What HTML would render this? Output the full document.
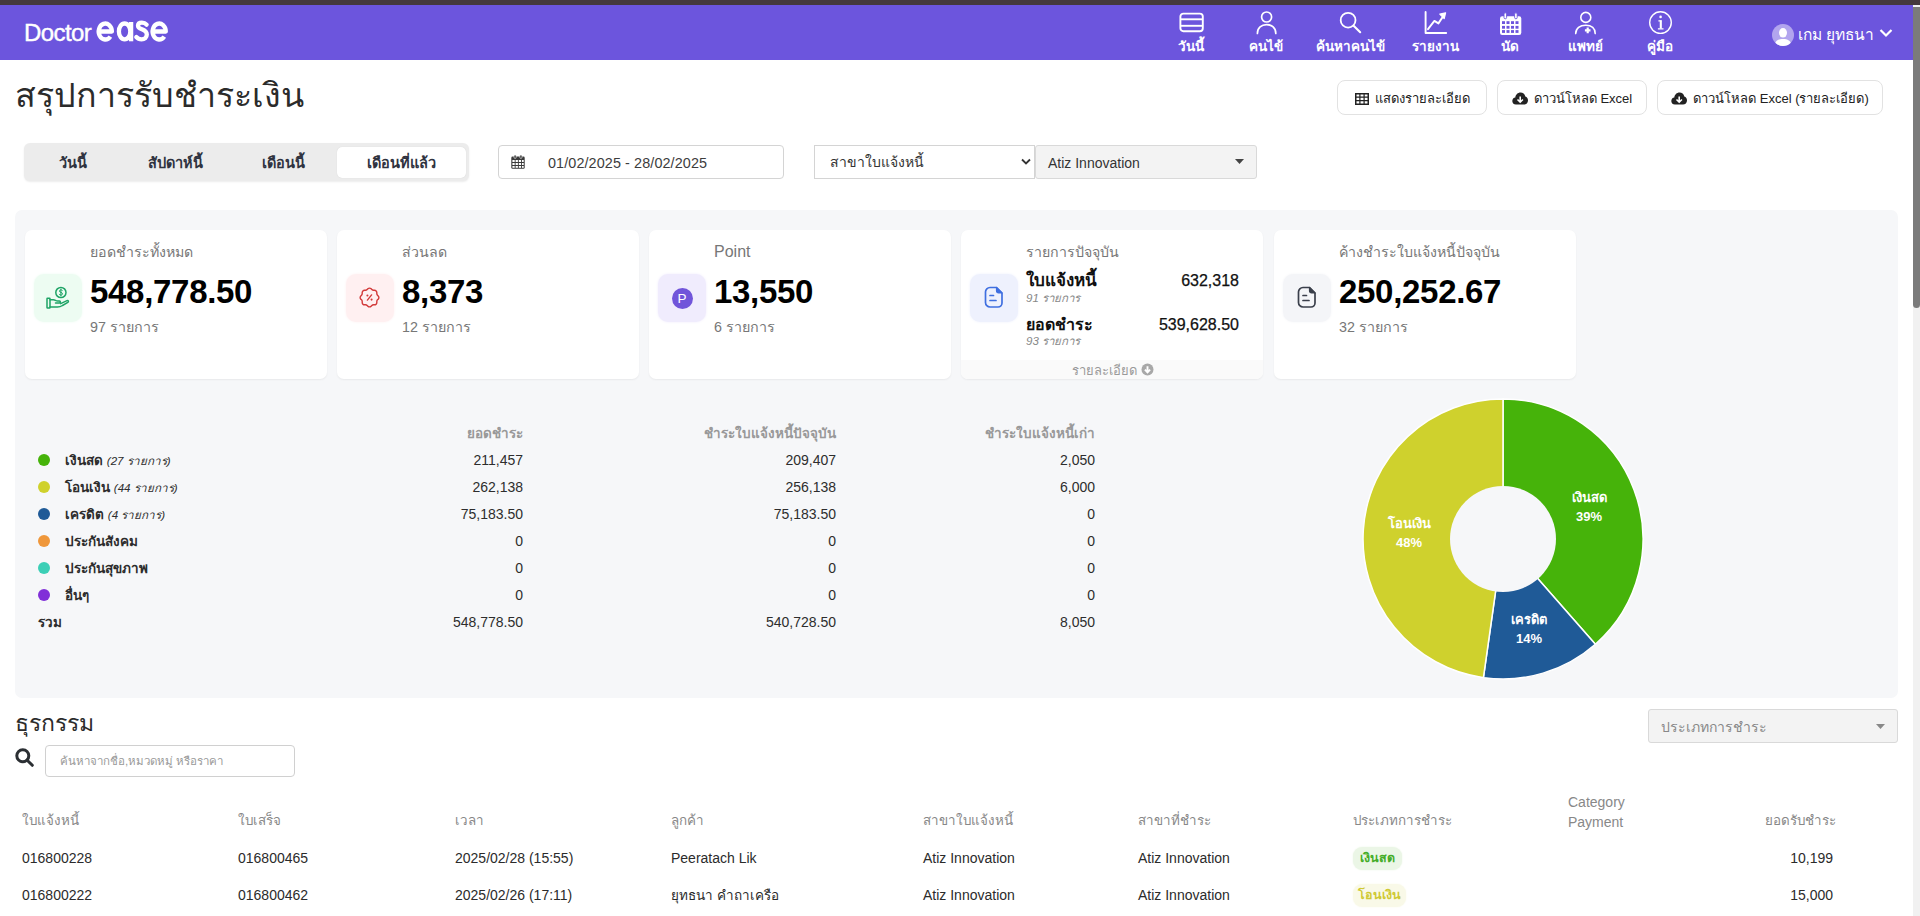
<!DOCTYPE html>
<html><head><meta charset="utf-8">
<style>
*{box-sizing:border-box;margin:0;padding:0}
html,body{width:1920px;height:916px;overflow:hidden;background:#fff;font-family:"Liberation Sans",sans-serif;color:#212529}
.a{position:absolute}
#topstrip{left:0;top:0;width:1920px;height:5px;background:#45393d}
#hdr{left:0;top:5px;width:1913px;height:55px;background:#6c55dd}
#sbar{left:1913px;top:5px;width:7px;height:911px;background:#f1f1f1}
#sthumb{left:1913px;top:7px;width:7px;height:301px;background:#7b7b7b;border-radius:0 0 3.5px 3.5px}
.logo{left:24px;top:19px;color:#fff;font-size:24px;white-space:nowrap}
.nav{top:11px;width:70px;text-align:center;color:#fff}
.nav svg{display:block;margin:0 auto}
.nav span{display:block;font-size:13.5px;font-weight:bold;line-height:16px;margin-top:3.5px;white-space:nowrap}
.title{left:15px;top:68px;font-size:34px;color:#2b2b2b;white-space:nowrap}
.btn{top:80px;height:35px;border:1px solid #e2e2e2;border-radius:8px;background:#fff;font-size:13px;color:#222;display:flex;align-items:center;justify-content:center;gap:6px;white-space:nowrap;padding-top:2px}
.seg{left:24px;top:143px;width:445px;height:38px;background:#ececec;border-radius:6px}
.segi{top:0;height:38px;line-height:41px;font-size:14.5px;font-weight:bold;color:#2f3340;text-align:center}
.segact{left:337px;top:147px;width:129px;height:31px;background:#fff;border-radius:5px}
.inp{border:1px solid #d4d4d4;border-radius:4px;background:#fff;font-size:14px;color:#333;white-space:nowrap}
.panel{left:15px;top:210px;width:1883px;height:488px;background:#f6f7f9;border-radius:7px}
.card{top:230px;width:302px;height:149px;background:#fff;border-radius:7px;box-shadow:0 1px 2px rgba(0,0,0,.06)}
.ibox{left:9px;top:44px;width:48px;height:48px;border-radius:10px}
.clab{left:65px;top:10.5px;font-size:14.2px;color:#777;white-space:nowrap}
.cnum{left:65px;top:43px;font-size:33px;font-weight:bold;color:#000;white-space:nowrap;letter-spacing:-0.3px}
.csub{left:65px;top:85.5px;font-size:14.3px;color:#777;white-space:nowrap}
.lg{font-size:14px;color:#2d2d2d;white-space:nowrap}
.lgh{font-size:13.5px;color:#999;font-weight:bold;white-space:nowrap}
.dot{width:12px;height:12px;border-radius:6px}
.th{font-size:13.4px;color:#888;white-space:nowrap}
.td{font-size:14px;color:#2b2b2b;white-space:nowrap}
</style></head><body>
<div id="topstrip" class="a"></div>
<div id="hdr" class="a"></div>
<div id="sbar" class="a"></div>
<div id="sthumb" class="a"></div>
<div class="a logo"><span style="font-size:24px;letter-spacing:-0.6px;-webkit-text-stroke:0.4px #fff">Doctor</span></div>


<svg class="a" style="left:90px;top:15px" width="85" height="33" viewBox="0 0 85 33" fill="none" stroke="#fff" stroke-width="4.3"><path d="M8.9 16.5H21.9A6.6 8 0 1 0 20.4 21.6" stroke-linejoin="round"/><ellipse cx="34.6" cy="16.4" rx="5.7" ry="7.9"/><path d="M41.1 7V26.3"/><path d="M56.6 9.6C55.2 8 53.6 7.6 51.9 7.6C49.4 7.6 48 8.9 48 10.7C48 15.3 56.8 13.4 56.8 19.6C56.8 22.6 54.6 24.3 51.6 24.3C49.5 24.3 47.7 23.6 46.3 22" stroke-linecap="round"/><path d="M62.8 16.5H75.8A6.6 8 0 1 0 74.3 21.6" stroke-linejoin="round"/></svg>
<!-- nav -->
<div class="a nav" style="left:1156px"><svg width="28" height="24" viewBox="0 0 28 24" fill="none" stroke="#fff" stroke-width="1.9"><rect x="3.4" y="2.6" width="22.4" height="17.6" rx="3"/><line x1="3.4" y1="8.3" x2="25.8" y2="8.3"/><line x1="3.4" y1="14.8" x2="25.8" y2="14.8"/></svg><span>วันนี้</span></div>
<div class="a nav" style="left:1231px"><svg width="28" height="24" viewBox="0 0 28 24" fill="none" stroke="#fff" stroke-width="1.7" stroke-linecap="round"><circle cx="14.6" cy="6" r="5"/><path d="M5.4 22.4C5.4 16.8 9.5 13.6 14.6 13.6C19.7 13.6 23.8 16.8 23.8 22.4"/></svg><span>คนไข้</span></div>
<div class="a nav" style="left:1315px"><svg width="28" height="24" viewBox="0 0 28 24" fill="none" stroke="#fff" stroke-width="1.8" stroke-linecap="round"><circle cx="12.1" cy="9.2" r="7.4"/><path d="M17.6 14.7L24.2 21.2" stroke-width="2.1"/></svg><span>ค้นหาคนไข้</span></div>
<div class="a nav" style="left:1400px"><svg width="28" height="24" viewBox="0 0 28 24" fill="none" stroke="#fff" stroke-width="1.9" stroke-linecap="round" stroke-linejoin="round"><path d="M4.6 1V22H25.2"/><path d="M7 18.2L13.4 9.9L17.4 12.4L23 4"/><path d="M24.6 1.8L18.8 3.2L23.2 7.6Z" fill="#fff" stroke-width="1.2"/></svg><span>รายงาน</span></div>
<div class="a nav" style="left:1475px"><svg width="28" height="24" viewBox="0 0 28 24"><rect x="4" y="5.2" width="21.3" height="18.8" rx="2.2" fill="#fff"/><rect x="8" y="1.8" width="2.6" height="6" rx="1.3" fill="#fff" stroke="#6c55dd" stroke-width="0.9"/><rect x="18.6" y="1.8" width="2.6" height="6" rx="1.3" fill="#fff" stroke="#6c55dd" stroke-width="0.9"/><g fill="#6c55dd"><rect x="6" y="10.2" width="3" height="2.8"/><rect x="10.5" y="10.2" width="3" height="2.8"/><rect x="15" y="10.2" width="3" height="2.8"/><rect x="19.5" y="10.2" width="3" height="2.8"/><rect x="6" y="14.9" width="3" height="2.8"/><rect x="10.5" y="14.9" width="3" height="2.8"/><rect x="15" y="14.9" width="3" height="2.8"/><rect x="19.5" y="14.9" width="3" height="2.8"/><rect x="6" y="19.1" width="3" height="2.8"/><rect x="10.5" y="19.1" width="3" height="2.8"/><rect x="15" y="19.1" width="3" height="2.8"/><rect x="19.5" y="19.1" width="3" height="2.8"/></g></svg><span>นัด</span></div>
<div class="a nav" style="left:1550px"><svg width="28" height="24" viewBox="0 0 28 24" fill="none" stroke="#fff" stroke-width="1.6" stroke-linecap="round"><circle cx="14.8" cy="6.4" r="5"/><path d="M4.7 22.6C4.7 17.3 9 14.2 14.8 14.2C20.6 14.2 24.2 17.3 24.2 22.6"/><path d="M16.7 16.6V22.2M13.9 19.4H19.5" stroke-width="2.2" stroke-linecap="butt"/></svg><span>แพทย์</span></div>
<div class="a nav" style="left:1625px"><svg width="28" height="24" viewBox="0 0 28 24" fill="none" stroke="#fff" stroke-width="1.4"><circle cx="14.5" cy="11.6" r="10.8"/><circle cx="14.6" cy="5.9" r="1.3" fill="#fff" stroke="none"/><path d="M14.8 9.3V17.6" stroke-width="2.1"/><path d="M12.4 9.9H15.5M11.9 17.9H17.5" stroke-width="1.4"/></svg><span>คู่มือ</span></div>
<div class="a" style="left:1772px;top:24px;width:22px;height:22px;border-radius:50%;background:#b2a5ee;overflow:hidden"><svg width="22" height="22" viewBox="0 0 22 22"><ellipse cx="11" cy="8.8" rx="4" ry="4.8" fill="#fff"/><path d="M2.5 22C3 16.5 6.5 15 11 15C15.5 15 19 16.5 19.5 22Z" fill="#fff"/></svg></div>
<div class="a" style="left:1798px;top:22px;color:#fff;font-size:15.5px;white-space:nowrap">เกม ยุทธนา</div>
<svg class="a" style="left:1879px;top:28px" width="14" height="10" viewBox="0 0 14 10" fill="none" stroke="#fff" stroke-width="2.2"><path d="M1.5 2 L7 7.5 L12.5 2"/></svg>

<!-- page header -->
<div class="a title">สรุปการรับชำระเงิน</div>
<div class="a btn" style="left:1337px;width:150px"><svg width="14" height="12" viewBox="0 0 14 12"><rect x="0.75" y="0.75" width="12.5" height="10.5" fill="none" stroke="#222" stroke-width="1.5"/><path d="M0.75 4.2H13.25M0.75 7.7H13.25M4.9 0.75V11.25M9.1 0.75V11.25" stroke="#222" stroke-width="1.2"/></svg>แสดงรายละเอียด</div>
<div class="a btn" style="left:1497px;width:150px"><svg width="16" height="13" viewBox="0 0 16 13"><path d="M4 12.5 C1.5 12.5 0.3 10.8 0.3 9 C0.3 7.2 1.6 5.8 3.3 5.6 C3.6 2.7 5.8 0.5 8.5 0.5 C10.9 0.5 12.8 2.1 13.3 4.4 C15 4.8 16 6.4 16 8.4 C16 10.7 14.3 12.5 12 12.5Z" fill="#222"/><path d="M8.2 4.5V10M5.5 7.5L8.2 10.2L10.9 7.5" stroke="#fff" stroke-width="1.6" fill="none"/></svg>ดาวน์โหลด Excel</div>
<div class="a btn" style="left:1657px;width:226px"><svg width="16" height="13" viewBox="0 0 16 13"><path d="M4 12.5 C1.5 12.5 0.3 10.8 0.3 9 C0.3 7.2 1.6 5.8 3.3 5.6 C3.6 2.7 5.8 0.5 8.5 0.5 C10.9 0.5 12.8 2.1 13.3 4.4 C15 4.8 16 6.4 16 8.4 C16 10.7 14.3 12.5 12 12.5Z" fill="#222"/><path d="M8.2 4.5V10M5.5 7.5L8.2 10.2L10.9 7.5" stroke="#fff" stroke-width="1.6" fill="none"/></svg>ดาวน์โหลด Excel (รายละเอียด)</div>

<!-- segmented -->
<div class="a seg" style="box-shadow:0 1px 2px rgba(0,0,0,.08)"></div>
<div class="a segact" style="box-shadow:0 0 1px rgba(0,0,0,.15)"></div>
<div class="a segi" style="left:24px;top:143px;width:97px">วันนี้</div>
<div class="a segi" style="left:121px;top:143px;width:109px">สัปดาห์นี้</div>
<div class="a segi" style="left:230px;top:143px;width:107px">เดือนนี้</div>
<div class="a segi" style="left:337px;top:143px;width:129px">เดือนที่แล้ว</div>

<!-- date -->
<div class="a inp" style="left:498px;top:145px;width:286px;height:34px"></div>
<svg class="a" style="left:511px;top:155px" width="14" height="14" viewBox="0 0 14 14"><rect x="0.3" y="1.6" width="13.4" height="12.1" rx="1.3" fill="#3a3a3a"/><rect x="3" y="0" width="2.2" height="3.4" rx="1" fill="#3a3a3a" stroke="#fff" stroke-width="0.6"/><rect x="8.8" y="0" width="2.2" height="3.4" rx="1" fill="#3a3a3a" stroke="#fff" stroke-width="0.6"/><g fill="#fff"><rect x="1.4" y="5" width="2.3" height="2"/><rect x="4.6" y="5" width="2.3" height="2"/><rect x="7.8" y="5" width="2.3" height="2"/><rect x="11" y="5" width="1.7" height="2"/><rect x="1.4" y="8" width="2.3" height="2"/><rect x="4.6" y="8" width="2.3" height="2"/><rect x="7.8" y="8" width="2.3" height="2"/><rect x="11" y="8" width="1.7" height="2"/><rect x="1.4" y="11" width="2.3" height="1.8"/><rect x="4.6" y="11" width="2.3" height="1.8"/><rect x="7.8" y="11" width="2.3" height="1.8"/><rect x="11" y="11" width="1.7" height="1.8"/></g></svg>
<div class="a" style="left:548px;top:155px;font-size:14.4px;color:#3d3d3d;letter-spacing:0.1px;white-space:nowrap">01/02/2025 - 28/02/2025</div>

<!-- branch select -->
<div class="a inp" style="left:814px;top:145px;width:221px;height:34px;border-radius:0"></div>
<div class="a" style="left:830px;top:151px;font-size:14px;color:#333;white-space:nowrap">สาขาใบแจ้งหนี้</div>
<svg class="a" style="left:1021px;top:158px" width="10" height="8" viewBox="0 0 10 8" fill="none" stroke="#333" stroke-width="1.8"><path d="M1 1.5 L5 5.5 L9 1.5"/></svg>
<div class="a" style="left:1035px;top:145px;width:222px;height:34px;background:#f3f3f3;border:1px solid #d9d9d9;border-radius:3px"></div>
<div class="a" style="left:1048px;top:155px;font-size:14px;color:#333;white-space:nowrap">Atiz Innovation</div>
<svg class="a" style="left:1235px;top:159px" width="9" height="5" viewBox="0 0 9 5"><path d="M0 0H9L4.5 5Z" fill="#444"/></svg>

<!-- panel -->
<div class="a panel"></div>
<!-- card 1 -->
<div class="a card" style="left:25px">
  <div class="a ibox" style="background:#edfcf2;box-shadow:0 0 3px #edfcf2"></div>
  <svg class="a" style="left:19px;top:54px" width="28" height="28" viewBox="0 0 28 28" fill="none" stroke="#1ea466" stroke-width="1.5" stroke-linecap="round" stroke-linejoin="round"><circle cx="16.9" cy="8.5" r="5.1"/><path d="M16.9 5.2V11.8M18.4 6.6C18 6 17.5 5.9 16.9 5.9C16 5.9 15.4 6.4 15.4 7.1C15.4 8.7 18.5 8 18.5 9.9C18.5 10.6 17.8 11.1 16.9 11.1C16.2 11.1 15.6 10.8 15.3 10.3" stroke-width="1"/><rect x="3" y="14.3" width="3" height="9.8" rx="0.5"/><path d="M6 15.8H9.5C11 15.8 12 17 13.5 17H15.5C16.7 17 16.7 19 15.5 19H11.5"/><path d="M6 23H13.5C15.5 23 17 22.5 18.5 21.5L23.8 18.4C25 17.6 24.3 16.1 23 16.6L16.6 19.6"/></svg>
  <div class="a clab">ยอดชำระทั้งหมด</div>
  <div class="a cnum">548,778.50</div>
  <div class="a csub">97 รายการ</div>
</div>
<!-- card 2 -->
<div class="a card" style="left:337px">
  <div class="a ibox" style="background:#fff0f1;box-shadow:0 0 3px #fff0f1"></div>
  <svg class="a" style="left:20px;top:55px" width="25" height="25" viewBox="0 0 24 24" fill="none" stroke="#d23a3a" stroke-width="1.35" stroke-linecap="round" stroke-linejoin="round"><path d="M10 14.5l4 -5"/><path d="M10 10h.01M14 14h.01" stroke-width="2"/><path d="M5 7.2a2.2 2.2 0 0 1 2.2 -2.2h1a2.2 2.2 0 0 0 1.55 -.64l.7 -.7a2.2 2.2 0 0 1 3.12 0l.7 .7c.412 .41 .97 .64 1.55 .64h1a2.2 2.2 0 0 1 2.2 2.2v1c0 .58 .23 1.138 .64 1.55l.7 .7a2.2 2.2 0 0 1 0 3.120l-.7 .7a2.2 2.2 0 0 0 -.64 1.55v1a2.2 2.2 0 0 1 -2.2 2.2h-1a2.2 2.2 0 0 0 -1.55 .64l-.7 .7a2.2 2.2 0 0 1 -3.12 0l-.7 -.7a2.2 2.2 0 0 0 -1.55 -.64h-1a2.2 2.2 0 0 1 -2.2 -2.2v-1a2.2 2.2 0 0 0 -.64 -1.55l-.7 -.7a2.2 2.2 0 0 1 0 -3.12l.7 -.7a2.2 2.2 0 0 0 .64 -1.55v-1"/></svg>
  <div class="a clab">ส่วนลด</div>
  <div class="a cnum">8,373</div>
  <div class="a csub">12 รายการ</div>
</div>
<!-- card 3 -->
<div class="a card" style="left:649px">
  <div class="a ibox" style="background:#f0ecfd;box-shadow:0 0 3px #f0ecfd"></div>
  <div class="a" style="left:22.5px;top:57.5px;width:21px;height:21px;border-radius:50%;background:#7155da;color:#fff;font-size:13.5px;text-align:center;line-height:21px">P</div>
  <div class="a clab" style="top:13px;font-size:16px">Point</div>
  <div class="a cnum">13,550</div>
  <div class="a csub">6 รายการ</div>
</div>
<!-- card 4 -->
<div class="a card" style="left:961px;overflow:hidden">
  <div class="a ibox" style="background:#eef1fd;box-shadow:0 0 3px #eef1fd"></div>
  <svg class="a" style="left:22.5px;top:56px" width="20" height="22" viewBox="0 0 20 22" fill="none" stroke="#3f6fe0" stroke-width="1.7" stroke-linejoin="round" stroke-linecap="round"><path d="M6 1.5H12.5L18 7V17A4 4 0 0 1 14 21H6A4.5 4.5 0 0 1 1.5 16.5V6A4.5 4.5 0 0 1 6 1.5Z"/><path d="M12.5 1.5V5A2 2 0 0 0 14.5 7H18Z" fill="#3f6fe0" stroke-width="1.2"/><path d="M6 9.5H9.5M6 14.5H12"/></svg>
  <div class="a clab">รายการปัจจุบัน</div>
  <div class="a" style="left:65px;top:36px;font-size:17px;font-weight:bold;color:#111;white-space:nowrap">ใบแจ้งหนี้</div>
  <div class="a" style="right:24px;top:42px;font-size:16px;color:#111;white-space:nowrap;-webkit-text-stroke:0.25px #111">632,318</div>
  <div class="a" style="left:65px;top:59px;font-size:11.5px;font-style:italic;color:#888;white-space:nowrap">91 รายการ</div>
  <div class="a" style="left:65px;top:82px;font-size:16px;font-weight:bold;color:#111;white-space:nowrap">ยอดชำระ</div>
  <div class="a" style="right:24px;top:86px;font-size:16px;color:#111;white-space:nowrap;-webkit-text-stroke:0.25px #111">539,628.50</div>
  <div class="a" style="left:65px;top:102px;font-size:11.5px;font-style:italic;color:#888;white-space:nowrap">93 รายการ</div>
  <div class="a" style="left:0;top:130px;width:302px;height:19px;background:#fafafa"></div>
  <div class="a" style="left:111px;top:130px;font-size:13px;color:#9a9a9a;white-space:nowrap">รายละเอียด</div>
  <svg class="a" style="left:180px;top:133px" width="13" height="13" viewBox="0 0 13 13"><circle cx="6.5" cy="6.5" r="6" fill="#a8a8a8"/><path d="M6.5 3.2V9.2M3.9 6.6L6.5 9.3L9.1 6.6" stroke="#fff" stroke-width="1.9" fill="none"/></svg>
</div>
<!-- card 5 -->
<div class="a card" style="left:1274px">
  <div class="a ibox" style="background:#f4f5f8;box-shadow:0 0 3px #f4f5f8"></div>
  <svg class="a" style="left:22.5px;top:56px" width="20" height="22" viewBox="0 0 20 22" fill="none" stroke="#3a3f4b" stroke-width="1.7" stroke-linejoin="round" stroke-linecap="round"><path d="M6 1.5H12.5L18 7V17A4 4 0 0 1 14 21H6A4.5 4.5 0 0 1 1.5 16.5V6A4.5 4.5 0 0 1 6 1.5Z"/><path d="M12.5 1.5V5A2 2 0 0 0 14.5 7H18Z" fill="#3a3f4b" stroke-width="1.2"/><path d="M6 9.5H9.5M6 14.5H12"/></svg>
  <div class="a clab">ค้างชำระใบแจ้งหนี้ปัจจุบัน</div>
  <div class="a cnum">250,252.67</div>
  <div class="a csub">32 รายการ</div>
</div>

<!-- legend table -->
<div class="a lgh" style="right:1397px;top:422px">ยอดชำระ</div>
<div class="a lgh" style="right:1084px;top:422px">ชำระใบแจ้งหนี้ปัจจุบัน</div>
<div class="a lgh" style="right:825px;top:422px">ชำระใบแจ้งหนี้เก่า</div>
<div class="a dot" style="left:38px;top:454px;background:#46b30a"></div>
<div class="a lg" style="font-size:13.5px;left:65px;top:449px;font-weight:bold">เงินสด <i style="font-weight:normal;font-size:11.6px">(27 รายการ)</i></div>
<div class="a lg" style="right:1397px;top:452px">211,457</div>
<div class="a lg" style="right:1084px;top:452px">209,407</div>
<div class="a lg" style="right:825px;top:452px">2,050</div>
<div class="a dot" style="left:38px;top:481px;background:#cfd12d"></div>
<div class="a lg" style="font-size:13.5px;left:65px;top:476px;font-weight:bold">โอนเงิน <i style="font-weight:normal;font-size:11.6px">(44 รายการ)</i></div>
<div class="a lg" style="right:1397px;top:479px">262,138</div>
<div class="a lg" style="right:1084px;top:479px">256,138</div>
<div class="a lg" style="right:825px;top:479px">6,000</div>
<div class="a dot" style="left:38px;top:508px;background:#1f5a97"></div>
<div class="a lg" style="font-size:13.5px;left:65px;top:503px;font-weight:bold">เครดิต <i style="font-weight:normal;font-size:11.6px">(4 รายการ)</i></div>
<div class="a lg" style="right:1397px;top:506px">75,183.50</div>
<div class="a lg" style="right:1084px;top:506px">75,183.50</div>
<div class="a lg" style="right:825px;top:506px">0</div>
<div class="a dot" style="left:38px;top:535px;background:#ef973b"></div>
<div class="a lg" style="font-size:13.5px;left:65px;top:530px;font-weight:bold">ประกันสังคม</div>
<div class="a lg" style="right:1397px;top:533px">0</div>
<div class="a lg" style="right:1084px;top:533px">0</div>
<div class="a lg" style="right:825px;top:533px">0</div>
<div class="a dot" style="left:38px;top:562px;background:#3ccfb6"></div>
<div class="a lg" style="font-size:13.5px;left:65px;top:557px;font-weight:bold">ประกันสุขภาพ</div>
<div class="a lg" style="right:1397px;top:560px">0</div>
<div class="a lg" style="right:1084px;top:560px">0</div>
<div class="a lg" style="right:825px;top:560px">0</div>
<div class="a dot" style="left:38px;top:589px;background:#8130d8"></div>
<div class="a lg" style="font-size:13.5px;left:65px;top:584px;font-weight:bold">อื่นๆ</div>
<div class="a lg" style="right:1397px;top:587px">0</div>
<div class="a lg" style="right:1084px;top:587px">0</div>
<div class="a lg" style="right:825px;top:587px">0</div>
<div class="a lg" style="font-size:13.5px;left:38px;top:611px;font-weight:bold">รวม</div>
<div class="a lg" style="right:1397px;top:614px">548,778.50</div>
<div class="a lg" style="right:1084px;top:614px">540,728.50</div>
<div class="a lg" style="right:825px;top:614px">8,050</div>
<!-- donut -->
<svg class="a" style="left:0;top:0" width="1920" height="916" viewBox="0 0 1920 916"><path d="M1503 539 L1503.00 399.00 A140 140 0 0 1 1595.37 644.20 Z" fill="#46b30a" stroke="#fff" stroke-width="1.5"/><path d="M1503 539 L1595.37 644.20 A140 140 0 0 1 1483.43 677.62 Z" fill="#1f5a97" stroke="#fff" stroke-width="1.5"/><path d="M1503 539 L1483.43 677.62 A140 140 0 0 1 1503.00 399.00 Z" fill="#cfd12d" stroke="#fff" stroke-width="1.5"/><circle cx="1503" cy="539" r="53" fill="#f6f7f9"/></svg>
<div class="a" style="left:1559px;top:487px;width:60px;text-align:center;color:#fff;font-size:13px;font-weight:bold;line-height:19px;padding-top:1px">เงินสด<br>39%</div>
<div class="a" style="left:1379px;top:513px;width:60px;text-align:center;color:#fff;font-size:13px;font-weight:bold;line-height:19px;padding-top:1px">โอนเงิน<br>48%</div>
<div class="a" style="left:1499px;top:609px;width:60px;text-align:center;color:#fff;font-size:13px;font-weight:bold;line-height:19px;padding-top:1px">เครดิต<br>14%</div>

<!-- transactions -->
<div class="a" style="left:15px;top:705px;font-size:23px;color:#2b2b2b;white-space:nowrap">ธุรกรรม</div>
<svg class="a" style="left:15px;top:748px" width="19" height="19" viewBox="0 0 19 19" fill="none" stroke="#2b2f33" stroke-width="3"><circle cx="7.8" cy="7.8" r="6"/><path d="M12.2 12.2L17.3 17.3" stroke-linecap="round"/></svg>
<div class="a inp" style="left:45px;top:745px;width:250px;height:32px;border-color:#d0d0d0"></div>
<div class="a" style="left:60px;top:752px;font-size:11.5px;color:#999;white-space:nowrap">ค้นหาจากชื่อ,หมวดหมู่ หรือราคา</div>
<div class="a" style="left:1648px;top:709px;width:250px;height:34px;background:#f3f3f3;border:1px solid #d9d9d9;border-radius:3px"></div>
<div class="a" style="left:1661px;top:716px;font-size:14px;color:#888;white-space:nowrap">ประเภทการชำระ</div>
<svg class="a" style="left:1876px;top:724px" width="9" height="5" viewBox="0 0 9 5"><path d="M0 0H9L4.5 5Z" fill="#888"/></svg>

<div class="a th" style="left:22px;top:810px">ใบแจ้งหนี้</div>
<div class="a th" style="left:238px;top:810px">ใบเสร็จ</div>
<div class="a th" style="left:455px;top:810px">เวลา</div>
<div class="a th" style="left:671px;top:810px">ลูกค้า</div>
<div class="a th" style="left:923px;top:810px">สาขาใบแจ้งหนี้</div>
<div class="a th" style="left:1138px;top:810px">สาขาที่ชำระ</div>
<div class="a th" style="left:1353px;top:810px">ประเภทการชำระ</div>
<div class="a th" style="left:1568px;top:792px;line-height:20px;font-size:14px">Category<br>Payment</div>
<div class="a th" style="right:84px;top:810px">ยอดรับชำระ</div>

<div class="a td" style="left:22px;top:850px">016800228</div>
<div class="a td" style="left:238px;top:850px">016800465</div>
<div class="a td" style="left:455px;top:850px">2025/02/28 (15:55)</div>
<div class="a td" style="left:671px;top:850px">Peeratach Lik</div>
<div class="a td" style="left:923px;top:850px">Atiz Innovation</div>
<div class="a td" style="left:1138px;top:850px">Atiz Innovation</div>
<div class="a" style="left:1353px;top:847px;width:49px;height:23px;border-radius:9px;background:#ebf6e6;box-shadow:0 0 2px #ebf6e6;color:#45ad28;font-size:12.5px;font-weight:bold;text-align:center;line-height:23px">เงินสด</div>
<div class="a td" style="right:87px;top:850px">10,199</div>

<div class="a td" style="left:22px;top:887px">016800222</div>
<div class="a td" style="left:238px;top:887px">016800462</div>
<div class="a td" style="left:455px;top:887px">2025/02/26 (17:11)</div>
<div class="a td" style="left:671px;top:884px;font-size:13.5px">ยุทธนา คำถาเครือ</div>
<div class="a td" style="left:923px;top:887px">Atiz Innovation</div>
<div class="a td" style="left:1138px;top:887px">Atiz Innovation</div>
<div class="a" style="left:1353px;top:884px;width:53px;height:23px;border-radius:9px;background:#f9f9e8;box-shadow:0 0 2px #f9f9e8;color:#cfc934;font-size:12.5px;font-weight:bold;text-align:center;line-height:23px">โอนเงิน</div>
<div class="a td" style="right:87px;top:887px">15,000</div>
</body></html>
